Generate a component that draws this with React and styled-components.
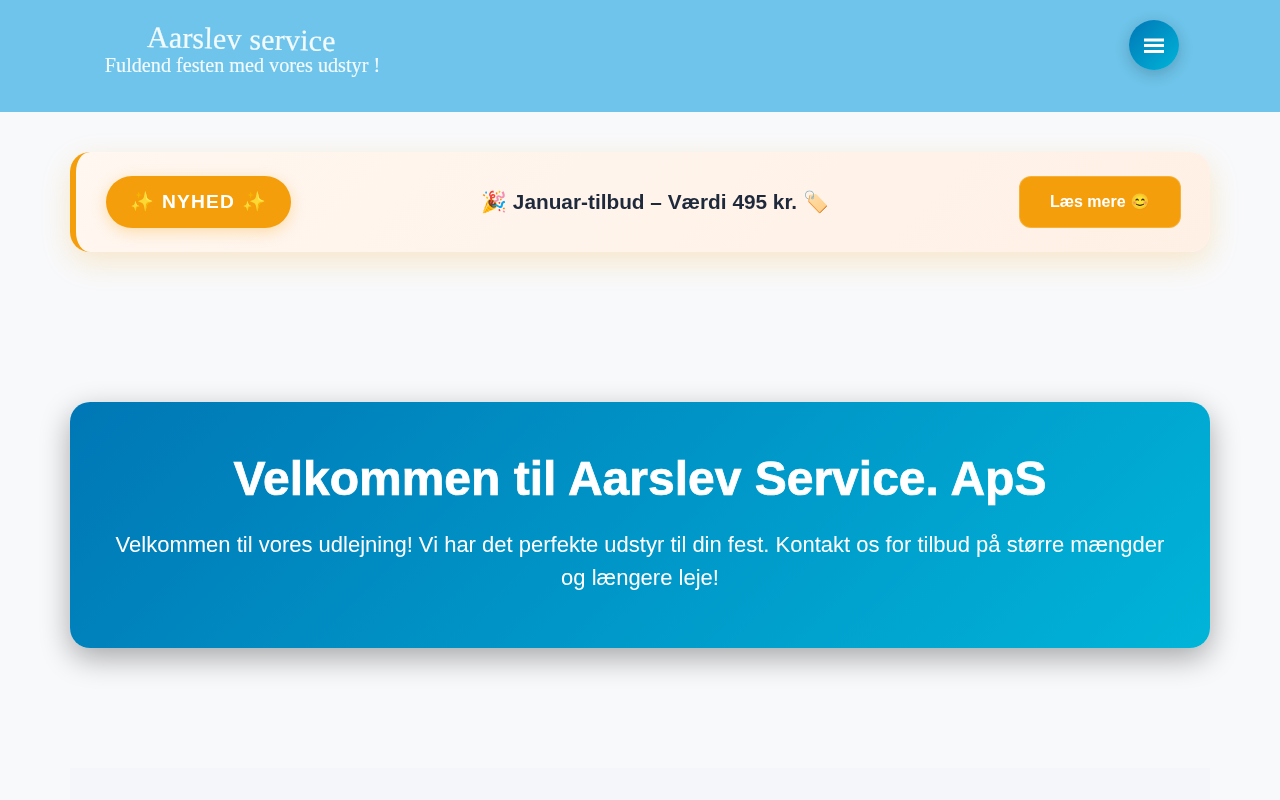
import React from "react";
import styled, { createGlobalStyle } from "styled-components";

const Global = createGlobalStyle`
  html, body { margin: 0; padding: 0; height: 800px; overflow: hidden; background: #f8f9fb; }
  body { font-family: "Liberation Sans", Arial, sans-serif; }
  * { box-sizing: border-box; }
`;

const Header = styled.header`
  height: 112px;
  background: #6ec4ea;
  display: flex;
  justify-content: space-between;
  align-items: flex-start;
  padding: 20px 101px 0 104px;
`;

const Logo = styled.div`
  width: 277px;
  padding-top: 2px;
  display: flex;
  flex-direction: column;
  align-items: center;
  color: #f2fafd;
  font-family: "Liberation Serif", serif;
  white-space: nowrap;
  will-change: transform;
`;

const LogoTitle = styled.div`
  font-size: 30px;
  line-height: 34px;
  margin-left: -2px;
  margin-bottom: -2px;
  transform: rotate(1.2deg);
  letter-spacing: 0.2px;
  -webkit-text-stroke: 0.2px #f2fafd;
`;

const LogoSub = styled.div`
  font-size: 20.2px;
  line-height: 22px;
  -webkit-text-stroke: 0.15px #f2fafd;
`;

const MenuButton = styled.button`
  width: 50px;
  height: 50px;
  border: 0;
  padding: 0;
  border-radius: 50%;
  display: flex;
  align-items: center;
  justify-content: center;
  background: linear-gradient(135deg, #0077b6, #00b4d8);
  box-shadow: 0 4px 15px rgba(0, 0, 0, 0.2);
`;

const Main = styled.main`
  width: 1140px;
  margin: 0 auto;
  padding-top: 40px;
`;

const Banner = styled.section`
  height: 100px;
  display: flex;
  align-items: center;
  justify-content: space-between;
  padding: 0 29px 0 30px;
  border-left: 6px solid #f59e0b;
  border-radius: 20px;
  background: linear-gradient(135deg, #fff7f0, #fff0e5);
  box-shadow: 0 10px 30px rgba(245, 158, 11, 0.2);
  will-change: transform;
`;

const Badge = styled.div`
  width: 185px;
  height: 52px;
  padding-bottom: 2px;
  border-radius: 26px;
  background: #f59e0b;
  color: #fff;
  font-size: 19.2px;
  font-weight: 700;
  letter-spacing: 1.2px;
  display: flex;
  align-items: center;
  justify-content: center;
  white-space: nowrap;
  box-shadow: 0 4px 15px rgba(245, 158, 11, 0.3);
`;

const Offer = styled.div`
  color: #1e293b;
  font-size: 20.8px;
  font-weight: 700;
  white-space: nowrap;
`;

const ReadMore = styled.a`
  width: 162px;
  height: 52px;
  padding-bottom: 2px;
  border: 1px solid rgba(255, 255, 255, 0.2);
  border-radius: 12px;
  background: #f59e0b;
  color: #fff;
  font-size: 16px;
  font-weight: 700;
  display: flex;
  align-items: center;
  justify-content: center;
  white-space: nowrap;
`;

const Hero = styled.section`
  margin-top: 150px;
  height: 246px;
  padding: 49px 40px 0;
  border-radius: 20px;
  background: linear-gradient(135deg, #0077b6, #00b4d8);
  color: #fff;
  text-align: center;
  box-shadow: 0 10px 30px rgba(0, 0, 0, 0.33);
  will-change: transform;
`;

const Title = styled.h1`
  margin: 0 0 21px;
  font-size: 48px;
  line-height: 56px;
  font-weight: 700;
  -webkit-text-stroke: 0.7px #fff;
`;

const Lead = styled.p`
  margin: 0;
  font-size: 22px;
  line-height: 33px;
`;

const NextSection = styled.section`
  margin-top: 120px;
  height: 32px;
  background: #f4f6fa;
`;

const MenuIcon = () => (
  <svg width="24" height="24" viewBox="0 0 24 24" fill="#fff">
    <path d="M2 5.5h20v3H2zM2 11h20v3H2zM2 17h20v3H2z" />
  </svg>
);

export default function App() {
  return (
    <>
      <Global />
      <Header>
        <Logo>
          <LogoTitle>Aarslev service</LogoTitle>
          <LogoSub>Fuldend festen med vores udstyr !</LogoSub>
        </Logo>
        <MenuButton aria-label="Menu"><MenuIcon /></MenuButton>
      </Header>
      <Main>
        <Banner>
          <Badge>✨ NYHED ✨</Badge>
          <Offer>🎉 Januar-tilbud – Værdi 495 kr. 🏷️</Offer>
          <ReadMore>Læs mere 😊</ReadMore>
        </Banner>
        <Hero>
          <Title>Velkommen til Aarslev Service. ApS</Title>
          <Lead>Velkommen til vores udlejning! Vi har det perfekte udstyr til din fest. Kontakt os for tilbud på større mængder og længere leje!</Lead>
        </Hero>
        <NextSection />
      </Main>
    </>
  );
}
